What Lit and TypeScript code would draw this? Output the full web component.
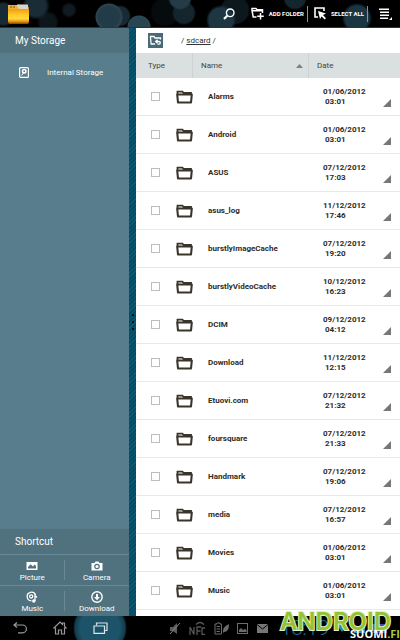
import { LitElement, html, css, svg } from "lit";
import { customElement } from "lit/decorators.js";

interface Entry { name: string; date: string; time: string; }

const entries: Entry[] = [
  { name: "Alarms", date: "01/06/2012", time: "03:01" },
  { name: "Android", date: "01/06/2012", time: "03:01" },
  { name: "ASUS", date: "07/12/2012", time: "17:03" },
  { name: "asus_log", date: "11/12/2012", time: "17:46" },
  { name: "burstlyImageCache", date: "07/12/2012", time: "19:20" },
  { name: "burstlyVideoCache", date: "10/12/2012", time: "16:23" },
  { name: "DCIM", date: "09/12/2012", time: "04:12" },
  { name: "Download", date: "11/12/2012", time: "12:15" },
  { name: "Etuovi.com", date: "07/12/2012", time: "21:32" },
  { name: "foursquare", date: "07/12/2012", time: "21:33" },
  { name: "Handmark", date: "07/12/2012", time: "19:06" },
  { name: "media", date: "07/12/2012", time: "16:57" },
  { name: "Movies", date: "01/06/2012", time: "03:01" },
  { name: "Music", date: "01/06/2012", time: "03:01" },
];

const base = css`
  * { box-sizing: border-box; }
  button {
    font: inherit; color: inherit; background: none; border: 0; padding: 0; margin: 0;
    display: flex; align-items: center; cursor: pointer; white-space: nowrap;
  }
  svg { display: block; flex: none; }
`;

@customElement("top-bar")
export class TopBar extends LitElement {
  static styles = [base, css`
    :host { display: block; }
    .bar {
      height: 28px; display: flex; align-items: center; overflow: hidden; color: #fff;
      font-size: 6px; font-weight: 700;
      border-bottom: 1px solid #2a353a;
      background:
        radial-gradient(circle at 3px 14px, #182a33 0 10px, transparent 13px),
        radial-gradient(circle at 69px 10px, #0f1b21 0 5px, transparent 8px),
        radial-gradient(circle at 36px 6px, #1a2d37 0 10px, transparent 14px),
        radial-gradient(circle at 48px 22px, #0c161b 0 8px, transparent 11px),
        radial-gradient(circle at 109px 17px, #233b47 0 10px, #2b4553 13px, transparent 14px),
        radial-gradient(circle at 120px 16px, #182a33 0 9px, transparent 11px),
        radial-gradient(circle at 139px 27px, #2a4552 0 10px, #2f4c5a 11px, transparent 12px),
        radial-gradient(circle at 180px -2px, #243c48 0 10px, transparent 12px),
        radial-gradient(circle at 184px 13px, #15252d 0 10px, transparent 12px),
        radial-gradient(circle at 165px 12px, #060b0e 0 13px, transparent 15px),
        radial-gradient(circle at 221px 20px, #1d3642 0 12px, transparent 15px),
        radial-gradient(circle at 235px 10px, #0c181d 0 13px, transparent 15px),
        radial-gradient(circle at 295px -2px, #142730 0 10px, transparent 12px),
        radial-gradient(circle at 357px 18px, #1b3642 0 12px, transparent 15px),
        #000;
    }
    .logo { margin-left: 7px; }
    .tools { margin-left: auto; display: flex; align-items: center; }
    .tool { gap: 4px; padding: 0 3px 0 6px; }
    .search { margin-right: 10px; }
    .rule { width: 1px; height: 16px; background: #8b9296; }
    .menu { margin: 0 8px 0 11px; }
  `];
  render() {
    return html`<header class="bar">
      <button class="logo" aria-label="File Manager">
        <svg width="23" height="22" viewBox="0 0 23 22">
          <defs><linearGradient id="g" x1="0" y1="0" x2="0" y2="1">
            <stop offset="0" stop-color="#f09c14"/><stop offset=".4" stop-color="#ffcb2a"/><stop offset=".65" stop-color="#ffd93a"/><stop offset=".85" stop-color="#e08c0c"/><stop offset="1" stop-color="#8a3a05"/>
          </linearGradient></defs>
          <path d="M1 2h10l2 2h9v15H1z" fill="#c97c10"/>
          <path d="M9 2h12v4H11z" fill="#d8d5ca"/><path d="M10 1h11v1H10z" fill="#777"/>
          <path d="M1 2h8l3 4H1z" fill="#e9b23a"/><path d="M3 4h6" stroke="#8d4b0c" stroke-dasharray="2 1"/>
          <path d="M1 6h21v13l-1 2H2l-1-2z" fill="url(#g)"/>
        </svg>
      </button>
      <div class="tools">
        <button class="search" aria-label="Search">
          <svg width="12" height="12" viewBox="0 0 12 12" fill="none" stroke="#fff"><circle cx="7.200" cy="4.800" r="3.800" stroke-width="1.400"/><path d="M4.200 7.800 1 11" stroke-width="2.200"/></svg>
        </button>
        <button class="tool">
          <svg width="14" height="13" viewBox="0 0 14 13" fill="none" stroke="#fff" stroke-width="1.500"><path d="M5.500 10H2.200L1 3.500V1.500h4l1 1.300h5.500V6"/><path d="M1 3.800h10.500M9.500 6v6.500M6.200 9.200h6.600"/></svg>
          ADD FOLDER
        </button>
        <i class="rule"></i>
        <button class="tool">
          <svg width="13" height="13" viewBox="0 0 13 13"><path d="M4 10H1V1h9v3" fill="none" stroke="#fff" stroke-width="1.600"/><path d="M4 4l8 2.600-3 1.500 3 3.200-1.400 1.300-3-3.200L6 12z" fill="#fff"/></svg>
          SELECT ALL
        </button>
        <i class="rule"></i>
        <button class="menu" aria-label="Menu">
          <svg width="13" height="12" viewBox="0 0 13 12"><path d="M0 1.200h10M1 4.200h9M1 7.200h9M1 10.200h8" stroke="#fff" stroke-width="1.400"/><path d="M13 9v3h-3z" fill="#fff"/></svg>
        </button>
      </div>
    </header>`;
  }
}

const shortcuts = [
  { label: "Picture", icon: svg`<path fill-rule="evenodd" d="M.5 2h11v8H.5zM2 8.600h8V6L8.600 4.600 7 6.400 4.600 4.200 2 7z" fill="#fff"/>` },
  { label: "Camera", icon: svg`<path d="M.5 3H3.500l1-1.500h3L8.500 3h3v7.500H.5z" fill="#fff"/><circle cx="6" cy="6.500" r="2.200" fill="none" stroke="#50717e" stroke-width="1.200"/>` },
  { label: "Music", icon: svg`<g fill="none" stroke="#fff" stroke-width="1.300"><path d="M5.500 9.800A4.300 4.300 0 1 1 9.500 4"/><circle cx="5.200" cy="5.400" r="1.600"/><path d="M9 10V4.500l2 2"/></g><circle cx="7.800" cy="10" r="1.700" fill="#fff"/>` },
  { label: "Download", icon: svg`<circle cx="6" cy="6" r="5.200" fill="none" stroke="#fff" stroke-width="1.400"/><path d="M5 3h2v3h2L6 9.200 3 6h2z" fill="#fff"/>` },
];

@customElement("side-bar")
export class SideBar extends LitElement {
  static styles = [base, css`
    :host { display: flex; flex-direction: column; flex: 0 0 129px; background: #587d8c; color: #fff; }
    h2 { margin: 0; height: 25px; line-height: 26px; padding-left: 15px; font-size: 10px; font-weight: 400; background: #50717e; }
    .storage { height: 38px; padding-left: 18px; gap: 17px; font-size: 8px; }
    .shortcuts { margin-top: auto; background: #50717e; }
    .grid { display: grid; grid-template-columns: 1fr 1fr; border-top: 1px solid #688995; }
    .item { height: 30px; padding-top: 3px; flex-direction: column; justify-content: center; font-size: 8px; line-height: 10px; gap: 1px; width: 100%; }
    .cell { background: linear-gradient(#688995, #688995) right 5px / 1px 20px no-repeat; }
    .cell:nth-child(2n) { background: none; }
    .cell:nth-child(n + 3) { border-top: 1px solid #688995; }
  `];
  render() {
    return html`
      <h2>My Storage</h2>
      <button class="storage">
        <svg width="12" height="13" viewBox="0 0 12 13"><rect x="1.600" y="1.600" width="8.800" height="9.800" rx="1" fill="none" stroke="#fff" stroke-width="1.200"/><circle cx="6.200" cy="5.200" r="1.700" fill="none" stroke="#fff" stroke-width="1.600"/><path d="M3.500 9.500 5.500 7" stroke="#fff"/></svg>
        Internal Storage
      </button>
      <section class="shortcuts">
        <h2>Shortcut</h2>
        <div class="grid">
          ${shortcuts.map((s) => html`<div class="cell"><button class="item">
            <svg width="12" height="12" viewBox="0 0 12 12">${s.icon}</svg>${s.label}</button></div>`)}
        </div>
      </section>`;
  }
}

@customElement("file-list")
export class FileList extends LitElement {
  static styles = [base, css`
    :host { display: block; flex: 1; min-width: 0; background: #fff; color: #2f2c26; padding-bottom: 6px; }
    .path { height: 25px; display: flex; align-items: center; padding-left: 12px; font-size: 8px; white-space: pre; color: #333; }
    .path a { color: inherit; }
    .up { margin-right: 18px; }
    table { width: 100%; table-layout: fixed; border-collapse: separate; border-spacing: 0; }
    th { height: 25px; padding: 0 0 0 8px; background: #dadfe0; color: #444; font-size: 8px; font-weight: 400; text-align: left; }
    th + th { border-left: 1px solid #cdd3d3; }
    .type { width: 56px; padding-left: 12px; }
    .date { width: 92px; }
    .sort { width: 100%; justify-content: space-between; padding-right: 5px; }
    tbody tr { font-size: 8px; font-weight: 700; }
    td { height: 38px; padding: 0; border-bottom: 1px solid #e9e9e9; }
    .pick { display: flex; align-items: center; padding-left: 15px; gap: 16px; }
    input { appearance: none; flex: none; margin: 0; width: 9px; height: 9px; border: 1px solid #bdbdbd; background: #fff; }
    td.name { padding-left: 16px; }
    .when { display: flex; justify-content: space-between; align-items: flex-end; padding: 0 9px 0 15px; line-height: 10px; white-space: pre; }
    .time { padding-left: 2px; }
  `];
  render() {
    return html`
      <nav class="path">
        <button class="up" aria-label="Up one folder">
          <svg width="15" height="15" viewBox="0 0 15 15"><rect width="15" height="15" fill="#4b6a77"/><path d="M7 11H3.200L2.500 5V3.500h3.500L7 5h5.500v1.500M8 8.500h3a1.300 1.300 0 0 1 0 2.600H9.500M9.500 6.800 7.700 8.500l1.800 1.700" fill="none" stroke="#fff" stroke-width="1.300"/></svg>
        </button><span>/ <a href="#sdcard">sdcard</a> /</span>
      </nav>
      <table>
        <thead><tr>
          <th class="type">Type</th>
          <th><button class="sort">Name <svg width="7" height="4" viewBox="0 0 7 4"><path d="M0 4 3.500 0 7 4z" fill="#7d8081"/></svg></button></th>
          <th class="date">Date</th>
        </tr></thead>
        <tbody>
          ${entries.map((e, i) => html`<tr>
            <td><div class="pick"><input type="checkbox" id="f${i}" />
              <svg width="17" height="14" viewBox="0 0 17 14" fill="none" stroke="#3a352b"><path d="M1.500 4V1.600h5L7.500 3H15v2" stroke-width="1.800"/><path d="M1.200 4.500h14.600l-.8 8H2z" stroke-width="2.100" stroke-linejoin="round"/></svg>
            </div></td>
            <td class="name"><label for="f${i}">${e.name}</label></td>
            <td><div class="when"><div>${e.date}<div class="time">${e.time}</div></div>
              <button aria-label="Options for ${e.name}"><svg width="8" height="8" viewBox="0 0 8 8"><path d="M8 0v8H0z" fill="#777"/></svg></button></div></td>
          </tr>`)}
        </tbody>
      </table>`;
  }
}

@customElement("system-bar")
export class SystemBar extends LitElement {
  static styles = [base, css`
    :host { display: block; position: relative; }
    .bar { height: 24px; background: #000; display: flex; align-items: center; overflow: hidden; }
    .nav { width: 40px; height: 24px; justify-content: center; }
    .recent { width: 54px; margin-left: -7px; background: radial-gradient(circle at 50% 50%, #1d5368 0 20px, #123c4d 25px, transparent 27px); }
    .tray { display: flex; align-items: center; gap: 8px; margin-left: auto; }
    .clock { font: 300 20px/24px "Roboto", sans-serif; color: #1a6f8c; margin-left: 3px; }
    .status { margin-right: 8px; }
    .mark { position: absolute; right: 0; bottom: 0; display: flex; flex-direction: column; align-items: flex-end; }
    .brand { margin-right: 9px; font: 600 24px/20px "Inter", sans-serif; color: #93c335; -webkit-text-stroke: 2px #e3f0c4; paint-order: stroke; }
    .site { font: 700 11px/12px "Open Sans", sans-serif; color: #fff; white-space: nowrap; margin-top: -4px; }
    .fi { color: #a4cf3c; }
  `];
  render() {
    return html`<footer class="bar">
      <button class="nav" aria-label="Back"><svg width="14" height="12" viewBox="0 0 14 12" fill="none" stroke="#999" stroke-width="1.200"><path d="M1 3h8.500a3.700 3.700 0 0 1 0 7.800H5M4 .500 1 3l3 2.500"/></svg></button>
      <button class="nav" aria-label="Home"><svg width="14" height="14" viewBox="0 0 14 14" fill="none" stroke="#999" stroke-width="1.200"><path d="M2.500 7H.800L7 1l2.500 2.400V2h2v3.300L13.200 7h-1.700v6h-3V9h-3v4h-3z"/></svg></button>
      <button class="nav recent" aria-label="Recent apps"><svg width="15" height="12" viewBox="0 0 15 12" fill="none" stroke="#d7e6eb" stroke-width="1.200"><path d="M1 4h10.500v7.300H1z"/><path d="M3.500 3.500V1H14v7.500h-2"/></svg></button>
      <div class="tray">
        <svg width="12" height="13" viewBox="0 0 12 13"><path d="M1 5h3l4-4v11L4 9H1z" fill="#5c5c5c"/><path d="M1 12 11 1" stroke="#888"/></svg>
        <svg width="17" height="15" viewBox="0 0 17 15" fill="none" stroke="#555" stroke-width="1.300"><path d="M1 14V6l4 7.500V6M8 14V6h4M8 10h3.500M16 13.400h-3V7h3M7 3.500q4-4 8 0"/></svg>
        <svg width="15" height="13" viewBox="0 0 15 13"><path d="M2 2h1V1h3v1h1.500v10H1V2z" fill="none" stroke="#6c6c6c"/><path d="M2.500 4.500H6M2.500 7H6M2.500 9.500H6" stroke="#6c6c6c"/><path d="M9 11q-1-6 6-9 0 8-5 8z" fill="#6c6c6c"/></svg>
        <svg width="12" height="11" viewBox="0 0 12 11"><rect x=".500" y=".500" width="10" height="10" fill="none" stroke="#6c6c6c"/><path d="M2 9V7l2-2 2 2 2-1 1.500 1v2z" fill="#6c6c6c"/></svg>
        <svg width="12" height="9" viewBox="0 0 12 9"><path d="M0 0h11v9H0z" fill="#777"/><path d="M0 .500 5.500 5 11 .500" fill="none" stroke="#000"/></svg>
        <span class="clock">18:19</span>
        <svg class="status" width="55" height="14" viewBox="0 0 55 14"><path d="M0 4q5-4 10 0l-5 7z" fill="#238bb2"/><path d="M16 12 28 2v10z" fill="#238bb2"/><path d="M34 3h16v9H34z" fill="#3a4fa3"/></svg>
      </div>
    </footer>
    <div class="mark"><span class="brand">ANDROID</span><span class="site">SUOMI<span class="fi">.FI</span></span></div>`;
  }
}

@customElement("app-root")
export class AppRoot extends LitElement {
  static styles = [base, css`
    :host { display: flex; flex-direction: column; min-height: 100vh; font-family: "Roboto", sans-serif; }
    .main { flex: 1; display: flex; }
    .divider {
      flex: 0 0 7px; display: flex; flex-direction: column; align-items: center; justify-content: center; gap: 5px;
      background: repeating-linear-gradient(135deg, #044c66 0 2px, #0a5b75 2px 3px);
    }
    .dot { width: 2px; height: 2px; background: #001018; }
  `];
  render() {
    return html`<top-bar></top-bar>
      <main class="main">
        <side-bar></side-bar>
        <div class="divider"><i class="dot"></i><i class="dot"></i><i class="dot"></i></div>
        <file-list></file-list>
      </main>
      <system-bar></system-bar>`;
  }
}
